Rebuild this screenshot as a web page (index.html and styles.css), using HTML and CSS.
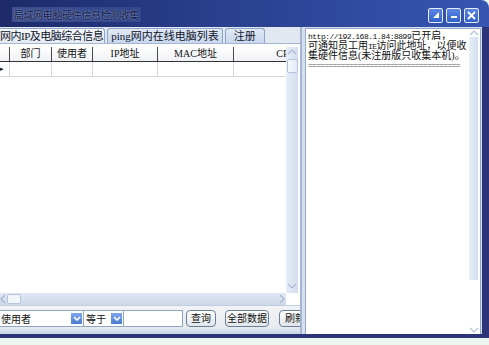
FILE: index.html
```html
<!DOCTYPE html>
<html lang="zh-CN">
<head>
  <meta charset="UTF-8">
  <title>局域网电脑硬件信息检测收集</title>
  <link rel="stylesheet" href="styles.css">
</head>
<body>

<div class="window">
  <div class="titlebar">
    <span class="title">局域网电脑硬件信息检测收集</span>
    <div class="ctrls">
      <span class="cbtn"><svg width="8" height="8" viewBox="0 0 8 8"><path d="M7 1 L1 7 L7 7 Z" fill="#fff"/></svg></span>
      <span class="cbtn"><svg width="8" height="8" viewBox="0 0 8 8"><rect x="1" y="5" width="6" height="2" fill="#fff"/></svg></span>
      <span class="cbtn"><svg width="9" height="9" viewBox="0 0 9 9"><path d="M1 1 L8 8 M8 1 L1 8" stroke="#fff" stroke-width="2"/></svg></span>
    </div>
  </div>

  <div class="main">
    <div class="left">
      <div class="tabs">
        <span class="tab active">网内IP及电脑综合信息</span>
        <span class="tab">ping网内在线电脑列表</span>
        <span class="tab reg">注册</span>
      </div>

      <div class="gridbox">
        <div class="gridarea">
          <div class="grid">
            <div class="row head">
              <span class="c0"></span>
              <span class="c1">部门</span>
              <span class="c2">使用者</span>
              <span class="c3">IP地址</span>
              <span class="c4">MAC地址</span>
              <span class="c5">CPU</span>
            </div>
            <div class="row">
              <span class="c0 mark">▸</span>
              <span class="c1"></span>
              <span class="c2"></span>
              <span class="c3"></span>
              <span class="c4"></span>
              <span class="c5"></span>
            </div>
          </div>
          <div class="vscroll">
            <svg class="arrow" width="10" height="8" viewBox="0 0 10 8"><path d="M1 6 L5 2 L9 6" fill="none" stroke="#a9b9d3" stroke-width="1.2"/></svg>
            <span class="thumb"></span>
            <span class="track"></span>
            <svg class="arrow" width="10" height="8" viewBox="0 0 10 8"><path d="M1 2 L5 6 L9 2" fill="none" stroke="#a9b9d3" stroke-width="1.2"/></svg>
          </div>
        </div>
        <div class="hscroll">
          <svg width="6" height="10" viewBox="0 0 6 10"><path d="M5 1 L1 5 L5 9" fill="none" stroke="#a9b9d3" stroke-width="1.2"/></svg>
          <span class="hthumb"></span>
          <span class="htrack"></span>
          <svg width="8" height="10" viewBox="0 0 8 10"><path d="M2 1 L6 5 L2 9" fill="none" stroke="#a9b9d3" stroke-width="1.2"/></svg>
        </div>
      </div>

      <div class="filter">
        <span class="combo wide"><span class="val">使用者</span><span class="drop"><svg width="8" height="6" viewBox="0 0 8 6"><path d="M1 1 L4 4 L7 1" fill="none" stroke="#fff" stroke-width="1.6"/></svg></span></span>
        <span class="combo narrow"><span class="val">等于</span><span class="drop"><svg width="8" height="6" viewBox="0 0 8 6"><path d="M1 1 L4 4 L7 1" fill="none" stroke="#fff" stroke-width="1.6"/></svg></span></span>
        <span class="field"></span>
        <button class="btn query">查询</button>
        <button class="btn all">全部数据</button>
        <button class="btn refresh">刷新</button>
      </div>
    </div>

    <div class="right">
      <div class="memo">
        <div class="text">
          <span class="url">http://192.168.1.84:8899</span>已开启，<br>
          可通知员工用<span class="url">IE</span>访问此地址，以便收<br>
          集硬件信息(未注册版只收集本机)。<br>
          <span class="rule">=====================================</span>
        </div>
        <div class="mscroll">
          <svg width="10" height="8" viewBox="0 0 10 8"><path d="M1 6 L5 2 L9 6" fill="none" stroke="#b3c2da" stroke-width="1.2"/></svg>
          <span class="mbar"></span>
          <span class="mrest"></span>
          <svg width="10" height="8" viewBox="0 0 10 8"><path d="M1 2 L5 6 L9 2" fill="none" stroke="#b3c2da" stroke-width="1.2"/></svg>
        </div>
      </div>
    </div>
  </div>

  <div class="navy"></div>
  <div class="foot"></div>
</div>

</body>
</html>
```

FILE: styles.css
```css
body {
  margin: 0;
  padding: 0;
  background-color: #eaf6ee;
  font-family: "Liberation Serif", "Noto Sans CJK SC", serif;
}
.window {
  width: 489px;
  height: 345px;
  display: flex;
  flex-direction: column;
  overflow: hidden;
  background-color: #eaf6ee;
}
.titlebar {
  height: 27px;
  flex: none;
  display: flex;
  align-items: center;
  justify-content: space-between;
  background: linear-gradient(to right, #1d2a68, #2a3f8e 45%, #3656b2);
  border-top-right-radius: 8px;
}
.title {
  margin-left: 12px;
  margin-top: 2px;
  padding: 0 2px;
  font-size: 10px;
  color: #141a40;
  background: linear-gradient(to right, rgba(120,145,210,0.35), rgba(120,145,210,0.15));
  text-shadow: 0 0 2px #9fb3e6;
  letter-spacing: -0.4px;
}
.ctrls {
  display: flex;
  gap: 3px;
  margin-right: 10px;
  margin-top: 3px;
}
.cbtn {
  width: 13px;
  height: 13px;
  border: 1px solid #e6ecf8;
  border-radius: 2px;
  background: linear-gradient(#5b86e4, #3361cc);
  display: flex;
  align-items: center;
  justify-content: center;
}
.main {
  height: 307px;
  flex: none;
  display: flex;
  background-color: #d5dfee;
  border-right: 7px solid #2b3577;
}
.left {
  width: 300px;
  flex: none;
  display: flex;
  flex-direction: column;
  border-right: 2px solid #a3b6d2;
  background-color: #e2e8f1;
}
.tabs {
  height: 16px;
  flex: none;
  display: flex;
  align-items: flex-end;
  gap: 2px;
  overflow: hidden;
  white-space: nowrap;
}
.tab {
  flex: none;
  height: 14px;
  padding: 0 3px;
  font-size: 11px;
  line-height: 14px;
  color: #10142a;
  border: 1px solid #8da3c7;
  border-bottom: none;
  border-radius: 3px 3px 0 0;
  background: linear-gradient(#e1e9f6, #c9d7ee);
}
.tab.active {
  margin-left: -7px;
  padding: 0 1px 0 6px;
  letter-spacing: -0.5px;
  background: linear-gradient(#f6f9fd, #e3eaf4);
}
.tab.reg {
  padding: 0 8px;
}
.gridbox {
  height: 258px;
  flex: none;
  display: flex;
  flex-direction: column;
  border-top: 1px solid #a3b6d2;
  padding-top: 3px;
  background-color: #ffffff;
}
.gridarea {
  flex: 1;
  display: flex;
  min-height: 0;
}
.grid {
  width: 286px;
  flex: none;
  overflow: hidden;
}
.row {
  display: flex;
  height: 14px;
  border-bottom: 1px solid #d4d8de;
  white-space: nowrap;
}
.row span {
  flex: none;
  border-right: 1px solid #d4d8de;
  font-size: 10px;
  line-height: 14px;
  text-align: center;
  color: #111;
}
.row.head {
  border-bottom: 1px solid #333;
  background: linear-gradient(#ffffff, #eef1f5);
}
.row.head span {
  border-right: 1px solid #4a4a4a;
}
.c0 { width: 9px; }
.c1 { width: 41px; }
.c2 { width: 40px; }
.c3 { width: 64px; }
.c4 { width: 75px; }
.c5 { width: 104px; }
.mark {
  font-size: 7px !important;
  text-align: left !important;
}
.vscroll {
  width: 12px;
  flex: none;
  display: flex;
  flex-direction: column;
  align-items: center;
  background: linear-gradient(to right, #e6edf7, #d3deee);
}
.vscroll .arrow {
  flex: none;
  margin: 1px 0 3px;
}
.thumb {
  width: 9px;
  height: 12px;
  border: 1px solid #b6c5dc;
  border-radius: 2px;
  background: linear-gradient(to right, #f7f9fd, #e2e9f4);
}
.track {
  flex: 1;
}
.hscroll {
  height: 12px;
  width: 286px;
  flex: none;
  display: flex;
  align-items: center;
  gap: 1px;
  background: linear-gradient(#dfe7f3, #ccd8ea);
}
.hthumb {
  width: 12px;
  height: 8px;
  border: 1px solid #b6c5dc;
  border-radius: 2px;
  background: #f2f5fa;
}
.htrack {
  flex: 1;
}
.filter {
  flex: 1;
  display: flex;
  align-items: center;
  border-top: 1px solid #c3cfe0;
  background: linear-gradient(#f2f3f5, #e7ebf0 75%, #c7d5ea);
  overflow: hidden;
  white-space: nowrap;
  padding-bottom: 3px;
}
.filter > * {
  flex: none;
}
.combo {
  height: 15px;
  display: flex;
  align-items: center;
  justify-content: space-between;
  border: 1px solid #8ea5c3;
  background-color: #ffffff;
  font-size: 10px;
  color: #111;
}
.combo.wide {
  width: 84px;
  margin-left: -2px;
}
.combo.narrow {
  width: 39px;
  border-left: none;
}
.val {
  padding-left: 2px;
}
.drop {
  width: 11px;
  height: 11px;
  margin-right: 1px;
  display: flex;
  align-items: center;
  justify-content: center;
  background: linear-gradient(#7ea7ea, #4a7bd6);
}
.field {
  width: 58px;
  height: 15px;
  border: 1px solid #8ea5c3;
  border-left: none;
  background-color: #ffffff;
}
.btn {
  height: 17px;
  padding: 0;
  font-family: "Liberation Serif", "Noto Sans CJK SC", serif;
  font-size: 10px;
  line-height: 14px;
  color: #111;
  border: 1px solid #6d7f98;
  border-radius: 4px;
  background: linear-gradient(#ffffff, #e1e6ec);
}
.btn.query {
  width: 30px;
  margin-left: 3px;
}
.btn.all {
  width: 44px;
  margin-left: 9px;
}
.btn.refresh {
  width: 32px;
  margin-left: 10px;
}
.right {
  flex: 1;
  padding: 1px 1px 0 3px;
  display: flex;
}
.memo {
  flex: 1;
  display: flex;
  border: 1px solid #93a8c8;
  border-bottom: none;
  background-color: #ffffff;
}
.text {
  flex: 1;
  padding: 2px 0 0 2px;
  font-size: 10px;
  line-height: 9px;
  color: #111;
  white-space: nowrap;
  overflow: hidden;
}
.url {
  font-family: "Liberation Mono", monospace;
  font-size: 8px;
  letter-spacing: -0.5px;
}
.rule {
  display: inline-block;
  margin-top: 2px;
  font-family: "Liberation Mono", monospace;
  font-size: 8px;
  line-height: 8px;
  letter-spacing: -0.7px;
  color: #555;
}
.mscroll {
  width: 13px;
  flex: none;
  display: flex;
  flex-direction: column;
  align-items: center;
}
.mbar {
  width: 9px;
  height: 243px;
  background: linear-gradient(to right, #e9eff8, #d3deef);
}
.mrest {
  flex: 1;
}
.navy {
  height: 4px;
  flex: none;
  background-color: #2b3577;
}
.foot {
  flex: 1;
  background-color: #eaf6ee;
}
```
